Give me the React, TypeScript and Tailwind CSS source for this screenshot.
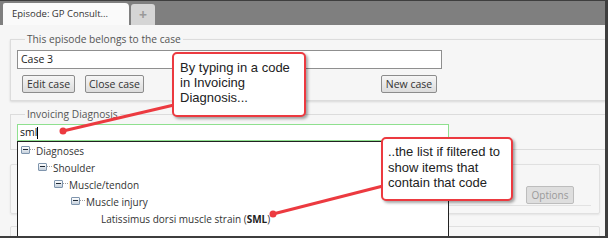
import React from "react";

const ui = "font-['Open_Sans',sans-serif]";
const note = "font-['Liberation_Sans',Arial,sans-serif]";

const tree = [
  { pad: "pl-[3px]", label: "Diagnoses", node: true },
  { pad: "pl-[20px]", label: "Shoulder", node: true },
  { pad: "pl-[36px]", label: "Muscle/tendon", node: true },
  { pad: "pl-[53px]", label: "Muscle injury", node: true },
  { pad: "pl-[83px]", label: "Latissimus dorsi muscle strain", node: false },
];

function Btn({ children, className = "" }: { children: React.ReactNode; className?: string }) {
  return (
    <button
      className={`h-[18px] rounded-[2px] border border-[#8c8c8c] bg-gradient-to-b from-[#f6f6f6] to-[#dcdcdc] text-[10.5px] leading-none text-[#333] ${className}`}
    >
      {children}
    </button>
  );
}

function MinusBox() {
  return (
    <span className="mb-[4px] flex h-[8px] w-[9px] shrink-0 items-center justify-center rounded-[1px] border border-[#7f95ad] bg-gradient-to-b from-white to-[#c5d0dc]">
      <span className="h-px w-[5px] bg-[#1f2a36]" />
    </span>
  );
}

export default function App() {
  return (
    <div className={`relative h-[238px] w-[608px] overflow-hidden border-t border-r-[3px] border-b-2 border-[#3e3e3e] bg-[#f6f6f6] ${ui} text-[10.5px] text-[#444]`}>
      {/* Tabs */}
      <div className="flex h-[24px] items-end gap-[2px] bg-[#7f7f7f] pl-[3px]">
        <div className="flex h-[22px] w-[126px] items-center rounded-tr-[4px] rounded-tl-[2px] bg-[#fafafa] pl-[9px] text-[9.5px] text-[#333]">
          Episode: GP Consult...
        </div>
        <div className="flex h-[21px] w-[24px] items-center justify-center rounded-t-[3px] bg-[#d5d5d5] text-[14px] font-bold leading-none text-[#9a9a9a]">
          +
        </div>
      </div>

      {/* Case */}
      <fieldset className="ml-[10px] mt-[7px] w-[596px] border border-[#dcdcdc] px-[6px] pb-[7px] pt-[4px] shadow-[0_1px_2px_rgba(0,0,0,0.12)]">
        <legend className="ml-[8px] px-[2px] text-[10.2px] leading-[14px] text-[#555]">This episode belongs to the case</legend>
        <div className="flex h-[19px] w-[425px] items-center border border-[#8f8f8f] bg-white pl-[3px] text-[#222]">Case 3</div>
        <div className="mt-[6px] flex w-[425px] items-center px-[5px]">
          <Btn className="w-[53px]">Edit case</Btn>
          <Btn className="ml-[10px] w-[59px]">Close case</Btn>
          <Btn className="ml-auto w-[56px]">New case</Btn>
        </div>
      </fieldset>

      {/* Invoicing diagnosis */}
      <fieldset className="ml-[10px] mt-[6px] w-[596px] border border-[#dcdcdc] px-[6px] pb-[8px] pt-[3px]">
        <legend className="ml-[8px] px-[2px] text-[10.2px] leading-[14px] text-[#555]">Invoicing Diagnosis</legend>
        <div className="flex h-[17px] w-[432px] items-center border border-[#8fe08f] bg-white pl-[2px] text-[#111]">
          sml<span className="h-[12px] w-px bg-black" />
        </div>
      </fieldset>

      {/* Panels behind the list */}
      <div className="ml-[10px] mt-[14px] h-[50px] w-[590px] rounded-[2px] border border-[#e0e0e0] pt-[21px] shadow-[0_1px_2px_rgba(0,0,0,0.08)]">
        <div className="ml-[6px] mr-[8px] flex justify-end border-b border-[#e2e2e2] pb-px pr-[17px]">
          <button className="h-[18px] w-[48px] rounded-[2px] border border-[#bdbdbd] bg-[#dedede] text-[10px] leading-none text-[#9a9a9a]">
            Options
          </button>
        </div>
      </div>
      <div className="ml-[10px] mt-[12px] h-[40px] w-[590px] rounded-[2px] border border-[#e0e0e0]" />

      {/* Filtered dropdown list */}
      <div className="absolute left-[17px] top-[140px] h-[120px] w-[432px] border border-[#222] bg-white pt-px text-[10px] text-[#333]">
        {tree.map((row) => (
          <div key={row.label} className={`flex h-[17px] items-center ${row.pad}`}>
            {row.node && (
              <>
                <MinusBox />
                <span className="mb-[4px] w-[5px] border-t border-dotted border-[#a0a0a0]" />
              </>
            )}
            <span className={row.node ? "ml-px" : ""}>
              {row.label}
              {!row.node && (
                <>
                  {" ("}
                  <b className="font-bold text-[#222]">SML</b>)
                </>
              )}
            </span>
          </div>
        ))}
      </div>

      {/* Annotation pointers */}
      <svg className="pointer-events-none absolute -top-px left-0" width="608" height="238">
        <line x1="174" y1="105" x2="63" y2="131" stroke="#ec3a40" strokeWidth="3" />
        <circle cx="63" cy="131" r="3.5" fill="#ec3a40" />
        <line x1="383" y1="186" x2="273" y2="214" stroke="#ec3a40" strokeWidth="3" />
        <circle cx="273" cy="214" r="3.5" fill="#ec3a40" />
      </svg>

      {/* Callouts */}
      <div className={`absolute left-[172px] top-[51px] h-[65px] w-[134px] rounded-[5px] border-[2.5px] border-[#ec3a40] bg-white pl-[6px] pt-[6px] ${note} text-[13px] leading-[15px] text-[#222] shadow-[2px_2px_3px_rgba(0,0,0,0.35)]`}>
        By typing in a code
        <br />
        in Invoicing
        <br />
        Diagnosis...
      </div>
      <div className={`absolute left-[381px] top-[136px] h-[64px] w-[132px] rounded-[5px] border-[2.5px] border-[#ec3a40] bg-white pl-[5px] pt-[5px] ${note} text-[13px] leading-[15.5px] text-[#222] shadow-[2px_2px_3px_rgba(0,0,0,0.35)]`}>
        ..the list if filtered to
        <br />
        show items that
        <br />
        contain that code
      </div>
    </div>
  );
}
